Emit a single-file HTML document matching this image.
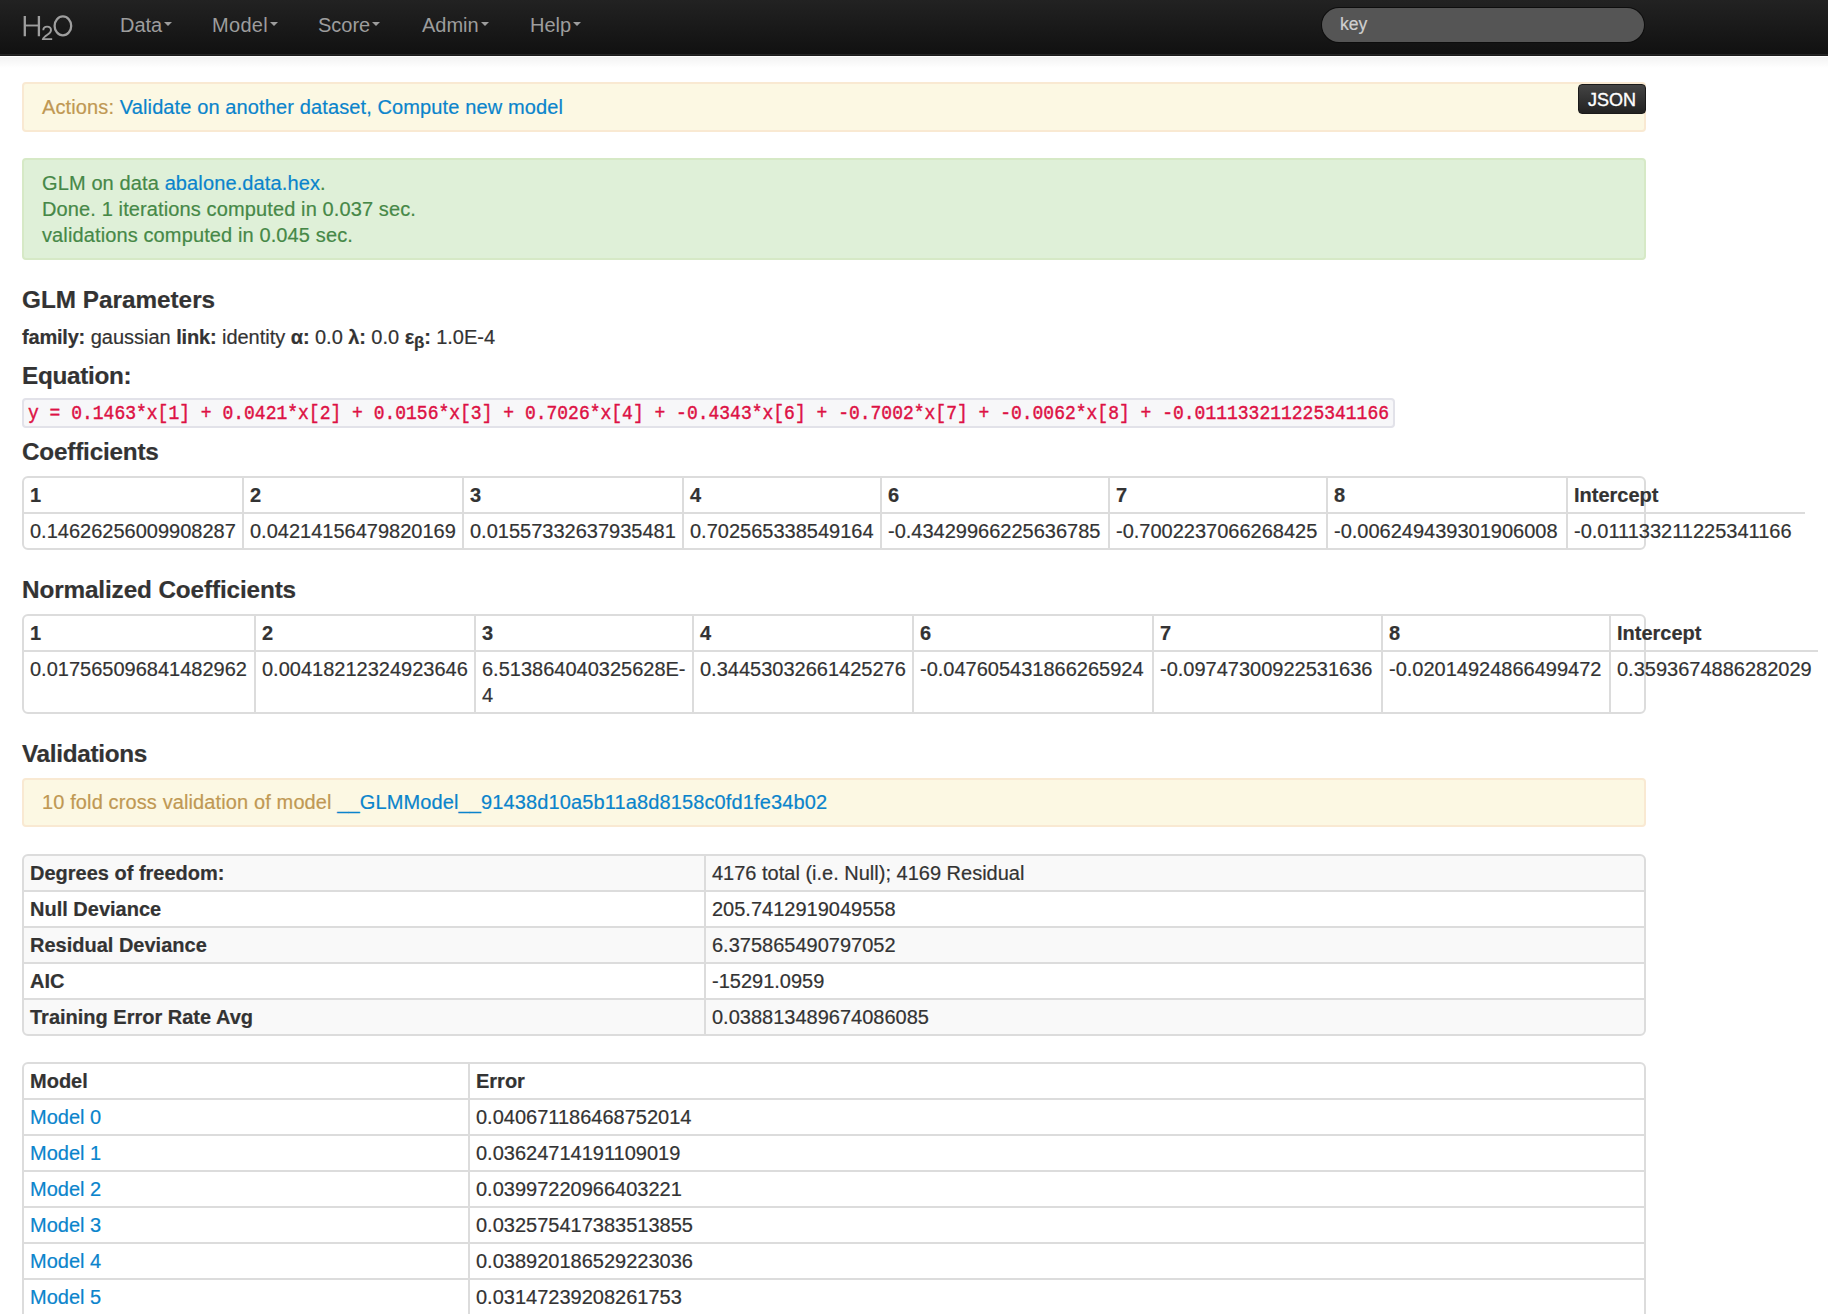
<!DOCTYPE html>
<html>
<head>
<meta charset="utf-8">
<style>
html,body{margin:0;padding:0;}
body{width:1828px;height:1314px;overflow:hidden;position:relative;background:#fff;
  font-family:"Liberation Sans",sans-serif;font-size:20px;line-height:26px;color:#333;-webkit-text-stroke:0.2px currentColor;}
a{color:#0a84cc;text-decoration:none;}
.abs{position:absolute;}
/* navbar */
#nav{position:absolute;left:0;top:0;width:1828px;height:54px;border-bottom:1px solid #262626;
  background:linear-gradient(to bottom,#222 0%,#111 100%);}
#navb{position:absolute;left:0;top:55px;width:1828px;height:1px;background:#1c1c1c;}
#navs{position:absolute;left:0;top:57px;width:1828px;height:11px;background:linear-gradient(to bottom,#f3f3f3,#fff);}
.ni{position:absolute;top:12px;color:#9d9d9d;font-size:20px;line-height:26px;white-space:nowrap;-webkit-text-stroke:0;}
.caret{display:inline-block;width:0;height:0;border-left:4px solid transparent;border-right:4px solid transparent;
  border-top:4px solid #9d9d9d;vertical-align:top;margin-top:10px;margin-left:2px;}
#search{position:absolute;left:1322px;top:8px;width:322px;height:34px;border-radius:18px;background:#555;
  box-shadow:0 0 0 1px #0d0d0d;}
#search span{position:absolute;left:18px;top:3px;color:#cfcfcf;font-size:17.6px;line-height:26px;}
/* alerts */
.alert{position:absolute;left:22px;width:1624px;border:2px solid;border-radius:4px;box-sizing:border-box;letter-spacing:0.12px;}
.warn{background:#fcf8e3;border-color:#f9e9d2;color:#c09853;}
.succ{background:#dff0d8;border-color:#d6e9c6;color:#468847;}
#json{position:absolute;left:1578px;top:84px;width:68px;height:30px;border-radius:4px;box-sizing:border-box;
  background:linear-gradient(to bottom,#444,#222);border:1px solid #1a1a1a;color:#fff;font-size:18px;line-height:30px;text-align:center;-webkit-text-stroke:0.35px #fff;}
h3{position:absolute;left:22px;margin:0;font-size:24.3px;line-height:30px;font-weight:bold;color:#333;white-space:nowrap;}
.txt{position:absolute;left:22px;white-space:nowrap;}
#code{position:absolute;left:22px;top:398px;width:1373px;height:30px;box-sizing:border-box;background:#f7f7f9;
  border:2px solid #e2e2e9;border-radius:4px;color:#dd1144;font-family:"Liberation Mono",monospace;font-size:18px;line-height:26px;
  padding-left:4px;white-space:nowrap;}
#code span{display:inline-block;transform:translateY(1.3px) scaleY(1.1);transform-origin:0 19px;-webkit-text-stroke:0.4px currentColor;}
/* tables */
.tc{white-space:nowrap;line-height:26px;}
.prm b{letter-spacing:-0.2px;}
</style>
</head>
<body>
<div id="navs"></div><div id="navb"></div>
<div id="nav">
  <svg style="position:absolute;left:0;top:0" width="90" height="54" viewBox="0 0 90 54"><g fill="none" stroke="#9e9e9e" stroke-width="2.3">
<path d="M24.8 15.9V36.2M38.9 15.9V36.2"/><path stroke-width="1.9" d="M24.8 25.5H38.9"/>
<ellipse cx="62.9" cy="25.9" rx="8.3" ry="9.5"/>
<path stroke-width="1.9" d="M43.3 30.2C43.3 27.6 45 26.6 47.1 26.6C49.5 26.6 51 28 51 30.2C51 32.2 49.6 33.3 47.4 34.7C45 36.3 43.4 37.6 43 39.1H52.2"/>
</g></svg>
  <div class="ni" style="left:120px">Data<span class="caret"></span></div>
  <div class="ni" style="left:212px;letter-spacing:0.3px">Model<span class="caret"></span></div>
  <div class="ni" style="left:318px">Score<span class="caret"></span></div>
  <div class="ni" style="left:422px">Admin<span class="caret"></span></div>
  <div class="ni" style="left:530px">Help<span class="caret"></span></div>
  <div id="search"><span>key</span></div>
</div>

<div class="alert warn" style="top:82px;height:50px;">
  <div class="abs" style="left:18px;top:10px;white-space:nowrap;">Actions: <a>Validate on another dataset,</a> <a>Compute new model</a></div>
</div>
<div id="json">JSON</div>

<div class="alert succ" style="top:158px;height:102px;">
  <div class="abs" style="left:18px;top:10px;white-space:nowrap;">GLM on data <a>abalone.data.hex</a>.<br>Done. 1 iterations computed in 0.037 sec.<br>validations computed in 0.045 sec.</div>
</div>

<h3 style="top:285px;">GLM Parameters</h3>
<div class="txt prm" style="top:324px;"><b>family:</b> gaussian <b>link:</b> identity <b>α:</b> 0.0 <b>λ:</b> 0.0 <b>ε<span style="font-size:17px;position:relative;top:4px;">β</span>:</b> 1.0E-4</div>
<h3 style="top:361px;letter-spacing:-0.3px;">Equation:</h3>
<div id="code"><span>y = 0.1463*x[1] + 0.0421*x[2] + 0.0156*x[3] + 0.7026*x[4] + -0.4343*x[6] + -0.7002*x[7] + -0.0062*x[8] + -0.011133211225341166</span></div>
<h3 style="top:437px;letter-spacing:-0.2px;">Coefficients</h3>

<h3 style="top:575px;letter-spacing:-0.12px;">Normalized Coefficients</h3>
<h3 style="top:739px;letter-spacing:-0.3px;">Validations</h3>
<div class="alert warn" style="top:778px;height:49px;">
  <div class="abs" style="left:18px;top:9px;white-space:nowrap;">10 fold cross validation of model <a>__GLMModel__91438d10a5b11a8d8158c0fd1fe34b02</a></div>
</div>
<!-- TABLES -->
<div class="abs" style="left:22px;top:476px;width:1624px;height:74px;box-sizing:border-box;border:2px solid #dcdcdc;border-radius:6px"></div>
<div class="abs" style="left:22px;top:512px;width:1783px;height:2px;background:#dcdcdc"></div>
<div class="abs" style="left:242px;top:477px;width:2px;height:72px;background:#dcdcdc"></div>
<div class="abs" style="left:462px;top:477px;width:2px;height:72px;background:#dcdcdc"></div>
<div class="abs" style="left:682px;top:477px;width:2px;height:72px;background:#dcdcdc"></div>
<div class="abs" style="left:880px;top:477px;width:2px;height:72px;background:#dcdcdc"></div>
<div class="abs" style="left:1108px;top:477px;width:2px;height:72px;background:#dcdcdc"></div>
<div class="abs" style="left:1326px;top:477px;width:2px;height:72px;background:#dcdcdc"></div>
<div class="abs" style="left:1566px;top:477px;width:2px;height:72px;background:#dcdcdc"></div>
<div class="abs tc" style="left:30px;top:482px; font-weight:bold;">1</div>
<div class="abs tc" style="left:250px;top:482px; font-weight:bold;">2</div>
<div class="abs tc" style="left:470px;top:482px; font-weight:bold;">3</div>
<div class="abs tc" style="left:690px;top:482px; font-weight:bold;">4</div>
<div class="abs tc" style="left:888px;top:482px; font-weight:bold;">6</div>
<div class="abs tc" style="left:1116px;top:482px; font-weight:bold;">7</div>
<div class="abs tc" style="left:1334px;top:482px; font-weight:bold;">8</div>
<div class="abs tc" style="left:1574px;top:482px; font-weight:bold;">Intercept</div>
<div class="abs tc" style="left:30px;top:518px;">0.14626256009908287</div>
<div class="abs tc" style="left:250px;top:518px;">0.04214156479820169</div>
<div class="abs tc" style="left:470px;top:518px;">0.01557332637935481</div>
<div class="abs tc" style="left:690px;top:518px;">0.702565338549164</div>
<div class="abs tc" style="left:888px;top:518px;">-0.43429966225636785</div>
<div class="abs tc" style="left:1116px;top:518px;">-0.7002237066268425</div>
<div class="abs tc" style="left:1334px;top:518px;">-0.006249439301906008</div>
<div class="abs tc" style="left:1574px;top:518px;">-0.011133211225341166</div>
<div class="abs" style="left:22px;top:614px;width:1624px;height:100px;box-sizing:border-box;border:2px solid #dcdcdc;border-radius:6px"></div>
<div class="abs" style="left:22px;top:650px;width:1796px;height:2px;background:#dcdcdc"></div>
<div class="abs" style="left:254px;top:615px;width:2px;height:98px;background:#dcdcdc"></div>
<div class="abs" style="left:474px;top:615px;width:2px;height:98px;background:#dcdcdc"></div>
<div class="abs" style="left:692px;top:615px;width:2px;height:98px;background:#dcdcdc"></div>
<div class="abs" style="left:912px;top:615px;width:2px;height:98px;background:#dcdcdc"></div>
<div class="abs" style="left:1152px;top:615px;width:2px;height:98px;background:#dcdcdc"></div>
<div class="abs" style="left:1381px;top:615px;width:2px;height:98px;background:#dcdcdc"></div>
<div class="abs" style="left:1609px;top:615px;width:2px;height:98px;background:#dcdcdc"></div>
<div class="abs tc" style="left:30px;top:620px; font-weight:bold;">1</div>
<div class="abs tc" style="left:262px;top:620px; font-weight:bold;">2</div>
<div class="abs tc" style="left:482px;top:620px; font-weight:bold;">3</div>
<div class="abs tc" style="left:700px;top:620px; font-weight:bold;">4</div>
<div class="abs tc" style="left:920px;top:620px; font-weight:bold;">6</div>
<div class="abs tc" style="left:1160px;top:620px; font-weight:bold;">7</div>
<div class="abs tc" style="left:1389px;top:620px; font-weight:bold;">8</div>
<div class="abs tc" style="left:1617px;top:620px; font-weight:bold;">Intercept</div>
<div class="abs tc" style="left:30px;top:656px;">0.017565096841482962</div>
<div class="abs tc" style="left:262px;top:656px;">0.00418212324923646</div>
<div class="abs tc" style="left:482px;top:656px;">6.513864040325628E-<br>4</div>
<div class="abs tc" style="left:700px;top:656px;">0.34453032661425276</div>
<div class="abs tc" style="left:920px;top:656px;">-0.047605431866265924</div>
<div class="abs tc" style="left:1160px;top:656px;">-0.09747300922531636</div>
<div class="abs tc" style="left:1389px;top:656px;">-0.02014924866499472</div>
<div class="abs tc" style="left:1617px;top:656px;">0.3593674886282029</div>
<div class="abs" style="left:24px;top:856px;width:1620px;height:34px;background:#f9f9f9"></div>
<div class="abs" style="left:24px;top:928px;width:1620px;height:34px;background:#f9f9f9"></div>
<div class="abs" style="left:24px;top:1000px;width:1620px;height:34px;background:#f9f9f9"></div>
<div class="abs" style="left:22px;top:854px;width:1624px;height:182px;box-sizing:border-box;border:2px solid #dcdcdc;border-radius:6px"></div>
<div class="abs" style="left:22px;top:890px;width:1623px;height:2px;background:#dcdcdc"></div>
<div class="abs" style="left:22px;top:926px;width:1623px;height:2px;background:#dcdcdc"></div>
<div class="abs" style="left:22px;top:962px;width:1623px;height:2px;background:#dcdcdc"></div>
<div class="abs" style="left:22px;top:998px;width:1623px;height:2px;background:#dcdcdc"></div>
<div class="abs" style="left:704px;top:855px;width:2px;height:180px;background:#dcdcdc"></div>
<div class="abs tc" style="left:30px;top:860px; font-weight:bold;">Degrees of freedom:</div>
<div class="abs tc" style="left:712px;top:860px;">4176 total (i.e. Null); 4169 Residual</div>
<div class="abs tc" style="left:30px;top:896px; font-weight:bold;">Null Deviance</div>
<div class="abs tc" style="left:712px;top:896px;">205.7412919049558</div>
<div class="abs tc" style="left:30px;top:932px; font-weight:bold;">Residual Deviance</div>
<div class="abs tc" style="left:712px;top:932px;">6.375865490797052</div>
<div class="abs tc" style="left:30px;top:968px; font-weight:bold;">AIC</div>
<div class="abs tc" style="left:712px;top:968px;">-15291.0959</div>
<div class="abs tc" style="left:30px;top:1004px; font-weight:bold;">Training Error Rate Avg</div>
<div class="abs tc" style="left:712px;top:1004px;">0.038813489674086085</div>
<div class="abs" style="left:22px;top:1062px;width:1624px;height:279px;box-sizing:border-box;border:2px solid #dcdcdc;border-radius:6px"></div>
<div class="abs" style="left:22px;top:1098px;width:1623px;height:2px;background:#dcdcdc"></div>
<div class="abs" style="left:22px;top:1134px;width:1623px;height:2px;background:#dcdcdc"></div>
<div class="abs" style="left:22px;top:1170px;width:1623px;height:2px;background:#dcdcdc"></div>
<div class="abs" style="left:22px;top:1206px;width:1623px;height:2px;background:#dcdcdc"></div>
<div class="abs" style="left:22px;top:1242px;width:1623px;height:2px;background:#dcdcdc"></div>
<div class="abs" style="left:22px;top:1278px;width:1623px;height:2px;background:#dcdcdc"></div>
<div class="abs" style="left:468px;top:1063px;width:2px;height:277px;background:#dcdcdc"></div>
<div class="abs tc" style="left:30px;top:1068px; font-weight:bold;">Model</div>
<div class="abs tc" style="left:476px;top:1068px; font-weight:bold;">Error</div>
<div class="abs tc" style="left:30px;top:1104px;"><a>Model 0</a></div>
<div class="abs tc" style="left:476px;top:1104px;">0.040671186468752014</div>
<div class="abs tc" style="left:30px;top:1140px;"><a>Model 1</a></div>
<div class="abs tc" style="left:476px;top:1140px;">0.03624714191109019</div>
<div class="abs tc" style="left:30px;top:1176px;"><a>Model 2</a></div>
<div class="abs tc" style="left:476px;top:1176px;">0.03997220966403221</div>
<div class="abs tc" style="left:30px;top:1212px;"><a>Model 3</a></div>
<div class="abs tc" style="left:476px;top:1212px;">0.032575417383513855</div>
<div class="abs tc" style="left:30px;top:1248px;"><a>Model 4</a></div>
<div class="abs tc" style="left:476px;top:1248px;">0.038920186529223036</div>
<div class="abs tc" style="left:30px;top:1284px;"><a>Model 5</a></div>
<div class="abs tc" style="left:476px;top:1284px;">0.03147239208261753</div>
<!-- /TABLES -->

</body>
</html>
